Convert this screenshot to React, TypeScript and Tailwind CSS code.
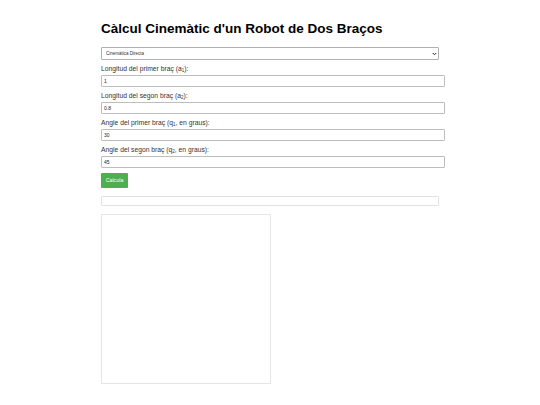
import { useState } from "react";

const fields = [
  { id: "a1", pre: "Longitud del primer braç (a", sub: "1", post: "):", value: "1" },
  { id: "a2", pre: "Longitud del segon braç (a", sub: "2", post: "):", value: "0.8" },
  { id: "q1", pre: "Angle del primer braç (q", sub: "1", post: ", en graus):", value: "30" },
  { id: "q2", pre: "Angle del segon braç (q", sub: "2", post: ", en graus):", value: "45" },
];

export default function App() {
  const [mode, setMode] = useState("directa");
  const [values, setValues] = useState<Record<string, string>>(
    Object.fromEntries(fields.map((f) => [f.id, f.value]))
  );

  return (
    <div className="min-h-[405px] bg-white font-['Liberation_Sans',Arial,sans-serif] text-[#222]">
      <div className="w-[338px] ml-[101px] pt-[20px]">
        <h1 className="text-[13.5px] leading-[17px] font-bold text-black">
          Càlcul Cinemàtic d'un Robot de Dos Braços
        </h1>

        <div className="relative mt-[10px]">
          <select
            value={mode}
            onChange={(e) => setMode(e.target.value)}
            className="block w-full h-[13px] appearance-none border border-[#b0b0b0] rounded-[1px] bg-white pl-[4px] text-[4.5px] leading-[11px] text-[#333] outline-none"
          >
            <option value="directa">Cinemàtica Directa</option>
            <option value="inversa">Cinemàtica Inversa</option>
          </select>
          <svg
            className="absolute right-[2px] top-[4.5px] w-[5px] h-[4px] pointer-events-none"
            viewBox="0 0 10 8"
          >
            <path d="M1.5 2 L5 5.5 L8.5 2" fill="none" stroke="#222" strokeWidth="2" />
          </svg>
        </div>

        {fields.map((f) => (
          <div key={f.id}>
            <label htmlFor={f.id} className="block mt-[5px] mb-[2px] text-[6.75px] leading-[8px] text-[#333]">
              {f.pre}
              <sub className="text-[4.5px]">{f.sub}</sub>
              {f.post}
            </label>
            <input
              id={f.id}
              value={values[f.id]}
              onChange={(e) => setValues({ ...values, [f.id]: e.target.value })}
              className="block w-[344px] h-[12px] border border-[#bdbdbd] rounded-[1px] px-[2px] text-[5px] text-[#222] outline-none"
            />
          </div>
        ))}

        <button className="block mt-[5px] h-[15px] w-[27px] rounded-[1px] bg-[#4caf50] text-[5.3px] text-white">
          Calcula
        </button>

        <div className="mt-[8px] h-[10px] border border-[#e2e2e2] rounded-[1px]" />

        <div className="mt-[8px] w-[170px] h-[170px] border border-[#e6e6e6]" />
      </div>
    </div>
  );
}
